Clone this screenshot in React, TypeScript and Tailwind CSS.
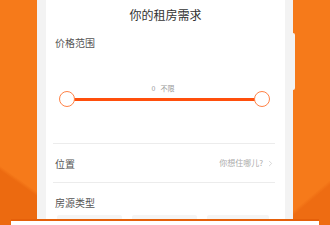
import { ChevronRight } from 'lucide-react';

const font = { fontFamily: '"Noto Sans CJK SC", "Noto Sans", sans-serif' };

export default function App() {
    return (
        <div
            className="relative w-[330px] h-[225px] overflow-hidden bg-[#f67a1a]"
            style={font}
        >
            {/* darker corners of the backdrop */}
            <div className="absolute inset-0 bg-[linear-gradient(35deg,#ec6a10_0%,#ec6a10_12%,rgba(246,122,26,0)_13%)]" />
            <div className="absolute inset-0 bg-[linear-gradient(-40deg,#ee6c12_0%,#ee6c12_8%,rgba(246,122,26,0)_9%)]" />

            <div className="relative flex pl-[37px]">
                {/* phone frame */}
                <div className="relative w-[256px] h-[220px] bg-[#f3f3f3] pl-[9px] pr-[8px]">
                    <div className="h-full overflow-hidden bg-white">
                        <div className="h-[30px] flex items-center justify-center text-[12px] text-[#333]">
                            你的租房需求
                        </div>

                        <div className="mt-[6px] pl-[9px] text-[10px] leading-[14px] text-[#555]">价格范围</div>

                        <div className="mt-[33px] h-[10px] flex items-center justify-center gap-[5px] pr-[5px] text-[7px] leading-[10px] text-[#999]">
                            <span>0</span>
                            <span>不限</span>
                        </div>

                        {/* slider */}
                        <div className="relative ml-[13px] mr-[15px] h-[12px] flex items-center">
                            <div className="absolute left-[8px] right-[8px] top-[5px] h-[3px] bg-[#ff4f0c]" />
                            <div className="relative w-[16px] h-[16px] rounded-full bg-white border-[1.5px] border-[#ff8246]" />
                            <div className="flex-1" />
                            <div className="relative w-[16px] h-[16px] rounded-full bg-white border-[1.5px] border-[#ff8246]" />
                        </div>

                        <div className="mt-[38px] ml-[7px] mr-[10px] h-px bg-[#ececec]" />

                        <div className="ml-[7px] mr-[10px] h-[38px] flex items-center justify-between pl-[2px]">
                            <span className="text-[10px] text-[#555]">位置</span>
                            <span className="flex items-center gap-[3px] text-[8px] text-[#aaa]">
                                你想住哪儿?
                                <ChevronRight size={9} strokeWidth={1.5} className="text-[#bbb]" />
                            </span>
                        </div>

                        <div className="ml-[7px] mr-[10px] h-px bg-[#ececec]" />

                        <div className="mt-[13px] pl-[9px] text-[10px] leading-[14px] text-[#555]">房源类型</div>

                        <div className="mt-[5px] pl-[11px] flex gap-[10px]">
                            <div className="w-[65px] h-[20px] rounded-[2px] bg-[#f5f5f5]" />
                            <div className="w-[65px] h-[20px] rounded-[2px] bg-[#f5f5f5]" />
                            <div className="w-[62px] h-[20px] rounded-[2px] bg-[#f5f5f5]" />
                        </div>
                    </div>
                </div>
            </div>

            {/* side buttons */}
            <div className="absolute left-[292px] top-[33px] w-[3px] h-[57px] rounded-r-[2px] bg-[#f3f3f3]" />

            {/* card below */}
            <div className="absolute left-[11px] top-[219px] w-[308px] h-[10px] bg-white border-t-2 border-[#e5600a]" />
        </div>
    );
}
